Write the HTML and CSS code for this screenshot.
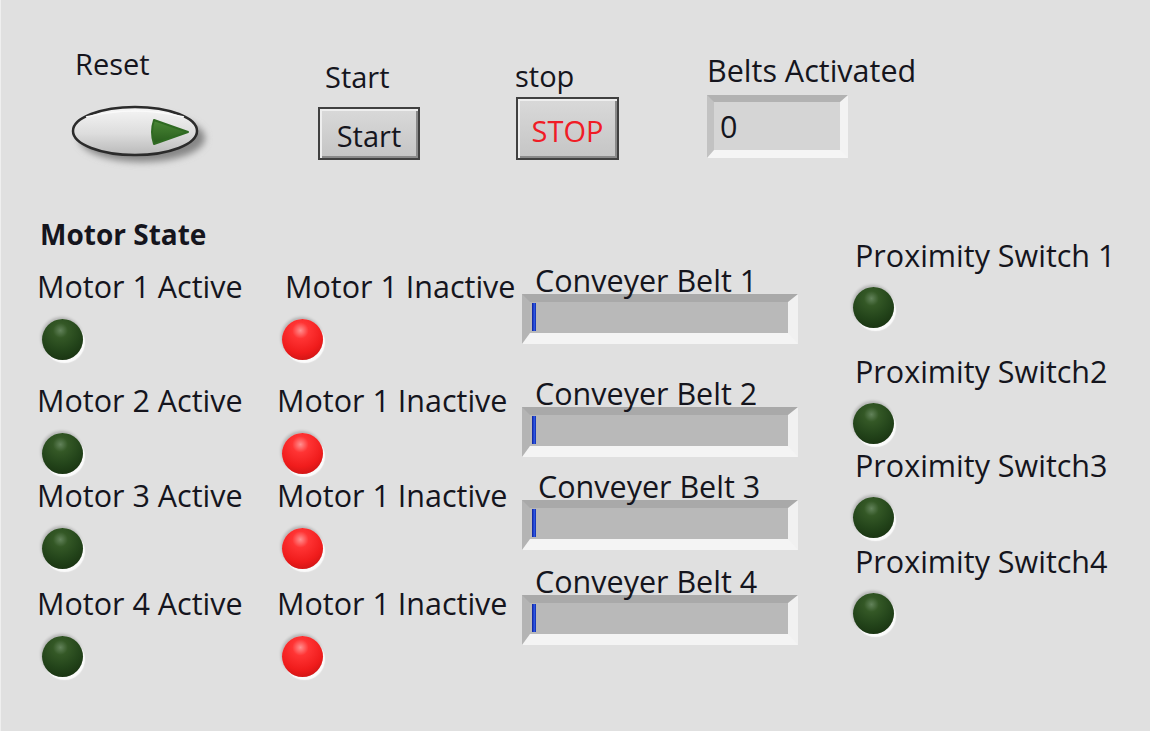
FILE: index.html
```html
<!DOCTYPE html>
<html lang="en">
<head>
<meta charset="utf-8">
<title>Conveyor Front Panel</title>
<link rel="stylesheet" href="styles.css">
</head>
<body>
<div class="panel">
  <div class="toprow">
    <div class="ctl ctl-reset">
      <div class="label">Reset</div>
      <svg class="reset-btn" width="140" height="62" viewBox="0 0 140 62">
        <defs>
          <linearGradient id="rg" x1="0" y1="0" x2="0" y2="1">
            <stop offset="0" stop-color="#f6f6f6"/>
            <stop offset="0.55" stop-color="#dddddd"/>
            <stop offset="1" stop-color="#b9b9b9"/>
          </linearGradient>
          <linearGradient id="tg" x1="0" y1="0" x2="0" y2="1">
            <stop offset="0" stop-color="#4a8836"/>
            <stop offset="1" stop-color="#285c1c"/>
          </linearGradient>
          <filter id="sh" x="-20%" y="-30%" width="140%" height="160%">
            <feGaussianBlur stdDeviation="3.5"/>
          </filter>
        </defs>
        <ellipse cx="70" cy="33" rx="63" ry="24" fill="#868686" filter="url(#sh)"/>
        <ellipse cx="63" cy="26" rx="62" ry="24" fill="url(#rg)" stroke="#2b2b2b" stroke-width="2.5"/>
        <path d="M14 12 Q63 0 112 12" fill="none" stroke="#fafafa" stroke-width="1.5"/>
        <path d="M82 15 L116 27 L82 39 Q78 27 82 15 Z" fill="url(#tg)" stroke="#2f6a22" stroke-width="2" stroke-linejoin="round"/>
      </svg>
    </div>
    <div class="ctl ctl-start">
      <div class="label">Start</div>
      <div class="btn btn-start">Start</div>
    </div>
    <div class="ctl ctl-stop">
      <div class="label">stop</div>
      <div class="btn btn-stop">STOP</div>
    </div>
    <div class="ctl ctl-belts">
      <div class="label label-lg">Belts Activated</div>
      <div class="numind">0</div>
    </div>
  </div>

  <div class="grid">
    <div class="col col-motor">
      <h2 class="section-title">Motor State</h2>
      <div class="item"><div class="label label-lg">Motor 1 Active</div><div class="led led-green"></div></div>
      <div class="item"><div class="label label-lg">Motor 2 Active</div><div class="led led-green"></div></div>
      <div class="item"><div class="label label-lg">Motor 3 Active</div><div class="led led-green"></div></div>
      <div class="item"><div class="label label-lg">Motor 4 Active</div><div class="led led-green"></div></div>
    </div>
    <div class="col col-motor col-inactive">
      <div class="item"><div class="label label-lg shift">Motor 1 Inactive</div><div class="led led-red"></div></div>
      <div class="item"><div class="label label-lg">Motor 1 Inactive</div><div class="led led-red"></div></div>
      <div class="item"><div class="label label-lg">Motor 1 Inactive</div><div class="led led-red"></div></div>
      <div class="item"><div class="label label-lg">Motor 1 Inactive</div><div class="led led-red"></div></div>
    </div>
    <div class="col col-belts">
      <div class="item"><div class="label label-lg">Conveyer Belt 1</div><div class="bar"><div class="bar-fill"></div></div></div>
      <div class="item"><div class="label label-lg">Conveyer Belt 2</div><div class="bar"><div class="bar-fill"></div></div></div>
      <div class="item"><div class="label label-lg shift">Conveyer Belt 3</div><div class="bar"><div class="bar-fill"></div></div></div>
      <div class="item"><div class="label label-lg">Conveyer Belt 4</div><div class="bar"><div class="bar-fill"></div></div></div>
    </div>
    <div class="col col-prox">
      <div class="item"><div class="label label-lg">Proximity Switch 1</div><div class="led led-green"></div></div>
      <div class="item"><div class="label label-lg">Proximity Switch2</div><div class="led led-green"></div></div>
      <div class="item"><div class="label label-lg">Proximity Switch3</div><div class="led led-green"></div></div>
      <div class="item"><div class="label label-lg">Proximity Switch4</div><div class="led led-green"></div></div>
    </div>
  </div>
</div>
</body>
</html>
```

FILE: styles.css
```css
html, body {
  margin: 0;
  padding: 0;
  background: #e0e0e0;
}

body {
  font-family: "Open Sans", "Noto Sans", sans-serif;
  color: #15151d;
}

.panel {
  width: 1150px;
  height: 731px;
  box-sizing: border-box;
  overflow: hidden;
  box-shadow: inset 1px 0 0 #efefef;
}

/* ---------- top row ---------- */
.toprow {
  display: flex;
  align-items: flex-start;
  height: 219px;
}

.ctl {
  display: flex;
  flex-direction: column;
  align-items: flex-start;
}

.label {
  position: relative;
  z-index: 1;
  font-size: 29px;
  font-weight: 500;
  line-height: 30px;
  white-space: nowrap;
}

.label-lg {
  font-size: 30.5px;
}

.ctl-reset {
  width: 140px;
  margin-left: 72px;
  margin-top: 49px;
}
.ctl-reset .label { margin-left: 3px; }
.reset-btn {
  display: block;
  margin-top: 26px;
  overflow: visible;
}

.ctl-start {
  width: 102px;
  margin-left: 106px;
  margin-top: 62px;
}
.ctl-start .label { margin-left: 7px; }
.ctl-start .btn { margin-top: 15px; }

.ctl-stop {
  width: 103px;
  margin-left: 96px;
  margin-top: 61px;
}
.ctl-stop .label { margin-left: -1px; }
.ctl-stop .btn { margin-top: 6px; }

.ctl-belts {
  width: 141px;
  margin-left: 88px;
  margin-top: 55px;
}
.ctl-belts .numind { margin-top: 10px; }

.btn {
  box-sizing: border-box;
  display: flex;
  justify-content: center;
  align-items: center;
  padding-top: 5px;
  border: 2px solid #404040;
  background: linear-gradient(#d9d9d9, #c5c5c5);
  box-shadow: inset 2px 2px 0 #eeeeee, inset -2px -2px 0 #8a8a8a;
  font-size: 29px;
  font-weight: 500;
  line-height: 30px;
  color: #15151d;
}

.btn-start {
  width: 102px;
  height: 53px;
}

.btn-stop {
  width: 103px;
  height: 63px;
  color: #f01c26;
}

.numind {
  box-sizing: border-box;
  width: 141px;
  height: 63px;
  border-style: solid;
  border-width: 7px 8px 8px 7px;
  border-color: #b2b2b2 #f3f3f3 #f5f5f5 #c2c2c2;
  background: #d5d5d5;
  padding: 9px 0 0 6px;
  font-size: 30.5px;
  font-weight: 500;
  line-height: 30px;
}

/* ---------- lower grid ---------- */
.grid {
  display: grid;
  grid-template-columns: 240px 245px 331px 1fr;
  padding-left: 37px;
}

.col {
  display: flex;
  flex-direction: column;
  align-items: flex-start;
}

.item {
  display: flex;
  flex-direction: column;
  align-items: flex-start;
}

.section-title {
  margin: 0 0 0 3px;
  font-size: 28px;
  font-weight: 700;
  line-height: 30px;
}

.col-inactive { padding-top: 30px; }
.col-inactive .shift { margin-left: 8px; }

.col-motor .led {
  margin-top: 18px;
  margin-left: 5px;
}
.col-motor .item:nth-of-type(1) { margin-top: 22px; }
.col-motor .item:nth-of-type(2) { margin-top: 24px; }
.col-motor .item:nth-of-type(3) { margin-top: 5px; }
.col-motor .item:nth-of-type(4) { margin-top: 18px; }

.col-belts .label { margin-left: 13px; }
.col-belts .label.shift { margin-left: 16px; }
.col-belts .item:nth-of-type(1) { margin-top: 46px; }
.col-belts .item:nth-of-type(2) { margin-top: 34px; }
.col-belts .item:nth-of-type(3) { margin-top: 14px; }
.col-belts .item:nth-of-type(4) { margin-top: 16px; }

.col-prox .label { margin-left: 2px; }
.col-prox .led { margin-top: 17px; }
.col-prox .item:nth-of-type(1) { margin-top: 21px; }
.col-prox .item:nth-of-type(2) { margin-top: 27px; }
.col-prox .item:nth-of-type(3) { margin-top: 5px; }
.col-prox .item:nth-of-type(4) { margin-top: 7px; }

/* ---------- LEDs ---------- */
.led {
  width: 41px;
  height: 41px;
  margin-bottom: 1px;
  border-radius: 50%;
  box-shadow: 2px 3px 1px 0 #fbfbfb, -1px -2px 3px rgba(0, 0, 0, 0.2);
}

.led-green {
  background: radial-gradient(circle at 45% 28%, #62825a 0, #345826 20%, #23441a 55%, #13290c 100%);
}

.led-red {
  background: radial-gradient(circle at 45% 28%, #ff9090 0, #ff3434 22%, #f01c1c 60%, #b80f0f 100%);
}

/* ---------- progress bars ---------- */
.bar {
  box-sizing: border-box;
  width: 276px;
  height: 50px;
  margin-top: -1px;
  border-style: solid;
  border-width: 8px 10px 11px 8px;
  border-color: #a9a9a9 #f1f1f1 #f4f4f4 #b4b4b4;
  background: #b9b9b9;
  padding: 1px 0 1px 2px;
}

.bar-fill {
  width: 4px;
  height: 28px;
  background: linear-gradient(90deg, #0a1e9a, #2f58e6 60%, #0d2aa8);
}
```
